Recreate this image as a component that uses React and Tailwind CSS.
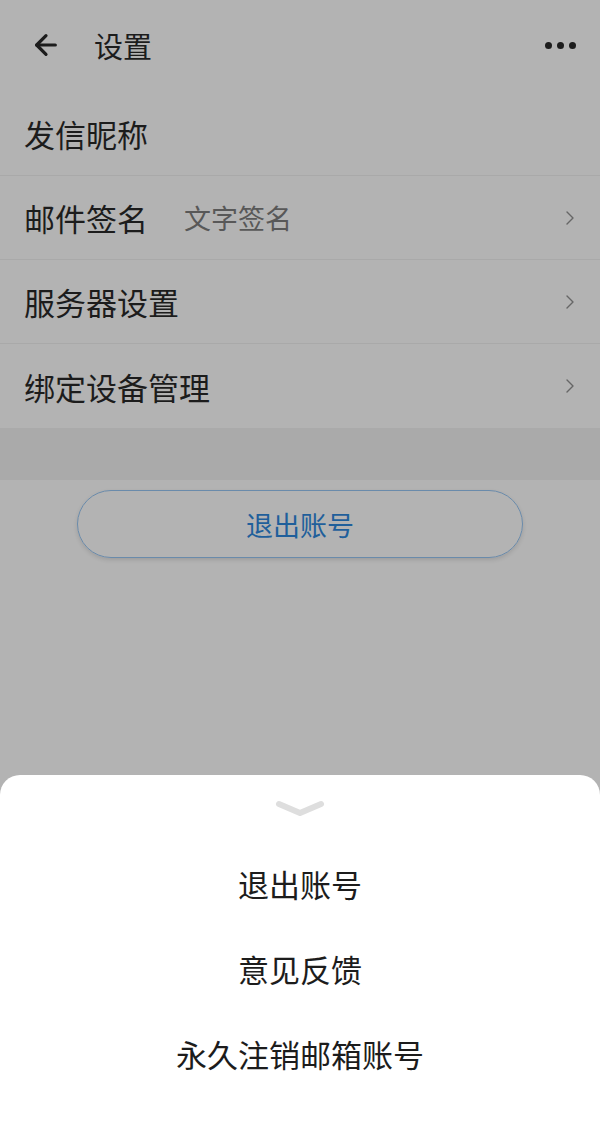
import { ArrowLeft, ChevronRight } from "lucide-react";

const rows = [
    { label: "发信昵称", arrow: false },
    { label: "邮件签名", value: "文字签名", arrow: true },
    { label: "服务器设置", arrow: true },
    { label: "绑定设备管理", arrow: true },
];

export default function App() {
    return (
        <div className="relative w-[600px] h-[1134px] overflow-hidden bg-[#b3b3b3] text-[#1c1c1c]" style={{ fontFamily: '"Noto Sans CJK SC", "Noto Sans", sans-serif' }}>
            <header className="flex items-center h-[92px] pb-[2px] pl-[30px] pr-[24px]">
                <ArrowLeft className="w-[32px] h-[32px]" strokeWidth={2.4} />
                <h1 className="ml-[32px] text-[29px] leading-none">设置</h1>
                <div className="ml-auto flex items-center gap-[5px]">
                    <span className="w-[7px] h-[7px] rounded-full bg-[#1c1c1c]" />
                    <span className="w-[7px] h-[7px] rounded-full bg-[#1c1c1c]" />
                    <span className="w-[7px] h-[7px] rounded-full bg-[#1c1c1c]" />
                </div>
            </header>

            <ul>
                {rows.map((row, i) => (
                    <li key={row.label} className={(i < rows.length - 1 ? "border-b border-[#a9a9a9] " : "") + "flex items-center h-[84px] pl-[24px] pr-[18px]"}>
                        <span className="text-[31px] leading-none">{row.label}</span>
                        {row.value && <span className="ml-[36px] text-[27px] leading-none text-[#585858]">{row.value}</span>}
                        {row.arrow && <ChevronRight className="ml-auto w-[24px] h-[24px] text-[#666666]" strokeWidth={1.4} />}
                    </li>
                ))}
            </ul>

            <div className="h-[52px] bg-[#aaaaaa]" />

            <div className="flex justify-center pt-[10px]">
                <button className="w-[446px] h-[68px] rounded-full border-[1.5px] border-[#6a8bab] shadow-[0_2px_4px_rgba(0,0,0,0.12)] text-[27px] text-[#1f5f9b] leading-none">
                    退出账号
                </button>
            </div>

            <div className="absolute left-0 right-0 bottom-0 h-[359px] bg-white rounded-t-[20px] flex flex-col items-center">
                <svg className="mt-[24px]" width="50" height="20" viewBox="0 0 50 20">
                    <path d="M4 5 L25 14 L46 5" fill="none" stroke="#dedede" strokeWidth="6" strokeLinecap="round" strokeLinejoin="round" />
                </svg>
                <div className="mt-[22px] flex flex-col items-center text-[31px] leading-none text-[#1c1c1c]">
                    <div className="h-[85px] flex items-center">退出账号</div>
                    <div className="h-[85px] flex items-center">意见反馈</div>
                    <div className="h-[85px] flex items-center">永久注销邮箱账号</div>
                </div>
            </div>
        </div>
    );
}
